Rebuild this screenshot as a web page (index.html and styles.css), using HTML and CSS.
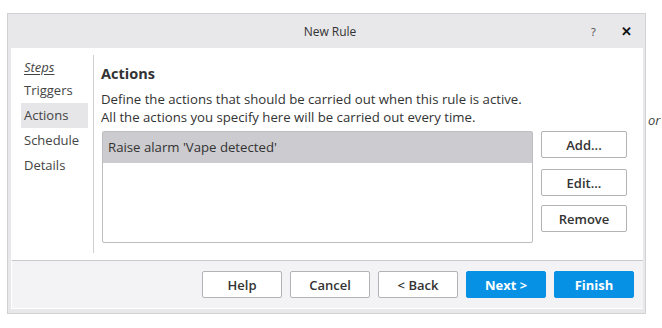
FILE: index.html
```html
<!DOCTYPE html>
<html lang="en">
<head>
    <meta charset="UTF-8">
    <title>New Rule</title>
    <link rel="stylesheet" href="styles.css">
</head>
<body>
    <span class="bg-text">or</span>
    <div class="dialog">
        <div class="titlebar">
            <span class="title">New Rule</span>
            <span class="tb-help">?</span>
            <span class="tb-close">&#x2715;</span>
        </div>
        <div class="body">
            <div class="steps">
                <div class="step head">Steps</div>
                <div class="step">Triggers</div>
                <div class="step active">Actions</div>
                <div class="step">Schedule</div>
                <div class="step">Details</div>
            </div>
            <div class="main">
                <h2>Actions</h2>
                <p class="desc">Define the actions that should be carried out when this rule is active.<br>All the actions you specify here will be carried out every time.</p>
                <div class="editor">
                    <div class="list">
                        <div class="row selected">Raise alarm 'Vape detected'</div>
                    </div>
                    <div class="side-btns">
                        <button class="btn">Add...</button>
                        <button class="btn">Edit...</button>
                        <button class="btn remove">Remove</button>
                    </div>
                </div>
            </div>
        </div>
        <div class="footer">
            <button class="btn">Help</button>
            <button class="btn">Cancel</button>
            <button class="btn">&lt; Back</button>
            <button class="btn primary">Next &gt;</button>
            <button class="btn primary">Finish</button>
        </div>
    </div>
</body>
</html>
```
FILE: styles.css
```css
body { margin: 0; background: #fff; font-family: 'Open Sans', 'Noto Sans', sans-serif; font-size: 13.2px; color: #333; }
.bg-text { position: absolute; left: 648px; top: 111px; font-style: italic; font-size: 13px; color: #444; }
.dialog { margin: 13px 0 0 7px; width: 632px; background: #e8e7ea; border: 1px solid #d2d1d4; padding: 0 2px 4px 3px; }
.titlebar { height: 34px; position: relative; display: flex; align-items: center; justify-content: center; }
.title { font-size: 12px; color: #333; margin-left: 6px; }
.tb-help { position: absolute; left: 580px; top: 10px; font-size: 11px; color: #444; }
.tb-close { position: absolute; left: 610px; top: 8px; font-size: 13px; font-weight: bold; color: #111; }
.body { background: #fff; display: flex; padding: 7px 0; height: 198px; }
.steps { width: 72px; padding-left: 10px; border-right: 1px solid #cfcfd1; }
.step { height: 25px; line-height: 25px; padding-left: 3px; width: 64px; font-size: 13px; color: #444; }
.step.head { height: 23px; line-height: 24px; font-style: italic; text-decoration: underline; text-underline-offset: 2px; }
.step.active { background: #e6e5e8; }
.main { flex: 1; padding: 0 14px 0 8px; }
.main h2 { margin: 9px 0 0 -1px; font-size: 14.5px; font-weight: bold; color: #333; height: 20px; line-height: 20px; }
.desc { margin: 6px 0 0 -1px; line-height: 18px; font-size: 13.2px; }
.editor { display: flex; gap: 8px; margin-top: 5px; }
.list { width: 429px; height: 110px; border: 1px solid #bdbcbf; border-radius: 2px; }
.row { height: 31px; line-height: 31px; padding-left: 5px; font-size: 13.2px; }
.row.selected { background: #cccbcf; }
.side-btns { display: flex; flex-direction: column; gap: 11px; }
.side-btns .btn { width: 86px; }
.side-btns .remove { margin-top: -2px; }
.btn { height: 27px; width: 80px; border: 1px solid #b3b3b5; border-radius: 2px; background: #fff; font-family: inherit; font-size: 13px; font-weight: 600; color: #333; padding: 0; }
.footer { background: #f3f2f5; border-top: 1px solid #cacacc; border-left: 1px solid #fff; border-bottom: 1px solid #fff; display: flex; justify-content: flex-end; gap: 8px; padding: 10px 9px 10px 0; }
.btn.primary { background: #0791e4; border-color: #0791e4; color: #fff; font-weight: bold; }
```
